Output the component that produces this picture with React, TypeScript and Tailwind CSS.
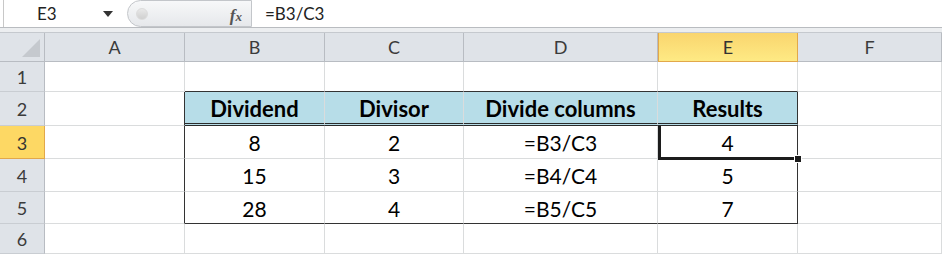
import React from 'react';

const cols = ['A', 'B', 'C', 'D', 'E', 'F'];
const widths = ['w-[140px]', 'w-[140px]', 'w-[139px]', 'w-[194px]', 'w-[140px]', 'w-[144px]'];
const heights = ['h-[30px]', 'h-[34px]', 'h-[33px]', 'h-[33px]', 'h-[32px]', 'h-[30px]'];

const table: Record<number, string[]> = {
    2: ['Dividend', 'Divisor', 'Divide columns', 'Results'],
    3: ['8', '2', '=B3/C3', '4'],
    4: ['15', '3', '=B4/C4', '5'],
    5: ['28', '4', '=B5/C5', '7'],
};

function cellClass(row: number, col: number) {
    // col: 0=A .. 5=F
    const inTable = row >= 2 && row <= 5 && col >= 1 && col <= 4;
    let cls = 'relative flex items-center justify-center shrink-0 border-r border-b border-[#dadcdd]';
    if (inTable) {
        cls += ' text-black';
        if (row === 2) cls += ' text-[22px] bg-[#b7dde8] font-bold border-b-[3px] border-b-[#2b2b2b] border-double pt-[1px]';
        else cls += ' text-[21px] pt-[2px]';
        if (row === 5) cls += ' border-b-[#333]';
        if (col === 4) cls += ' border-r-[#333]';
    }
    // table top / left edges live on the neighbours
    if (row === 1 && col >= 1 && col <= 4) cls += ' border-b-[#333]';
    if (col === 0 && row >= 2 && row <= 5) cls += ' border-r-[#333]';
    return cls;
}

export default function App() {
    return (
        <div className="w-[942px] h-[255px] overflow-hidden bg-white text-[#333]" style={{ fontFamily: 'Lato, "Open Sans", sans-serif' }}>
            {/* formula bar */}
            <div className="h-[28px] flex items-center border-b border-[#b9bcc0] bg-white">
                <div className="w-[124px] h-full flex items-center border-l border-[#c8c8c8] ml-[3px] relative">
                    <span className="ml-[33px] text-[17px] text-[#222]">E3</span>
                    <span className="absolute left-[99px] top-[11px] w-0 h-0 border-l-[5px] border-r-[5px] border-t-[6px] border-l-transparent border-r-transparent border-t-[#333]" />
                </div>
                <div className="w-[125px] h-full rounded-l-[14px] border border-[#c3c6ca] bg-gradient-to-b from-[#f7f8f9] to-[#e6e8eb] flex items-center relative">
                    <span className="ml-[8px] w-[12px] h-[12px] rounded-full bg-gradient-to-b from-[#e8e8e8] to-[#d0d0d0] border border-[#dcdcdc]" />
                    <span className="absolute right-[9px] top-[2px] text-[17px] italic font-bold text-[#555]" style={{ fontFamily: '"Liberation Serif", serif' }}>
                        f<span className="text-[13px]">x</span>
                    </span>
                </div>
                <span className="ml-[13px] text-[17px] text-[#222]">=B3/C3</span>
            </div>
            <div className="h-[5px] bg-[#eceef0] border-b border-[#c5c9ce]" />

            {/* column headers */}
            <div className="flex h-[29px]">
                <div className="w-[45px] shrink-0 bg-[#dfe3e8] border-r border-b border-[#b8bcc2] relative">
                    <svg className="absolute right-[4px] bottom-[4px]" width="18" height="18"><polygon points="18,0 18,18 0,18" fill="#c5c9ce" /></svg>
                </div>
                {cols.map((c, i) => (
                    <div
                        key={c}
                        className={`${widths[i]} shrink-0 flex items-center justify-center text-[18px] border-r border-b ${c === 'E'
                            ? 'bg-gradient-to-b from-[#f9d56e] to-[#feea84] border-[#e2a84a] border-l text-[#333]'
                            : 'bg-[#dfe3e8] border-[#b8bcc2] text-[#3b3b3b]'
                            }`}
                    >
                        {c}
                    </div>
                ))}
            </div>

            {/* rows */}
            {[1, 2, 3, 4, 5, 6].map((r, ri) => (
                <div key={r} className={`flex ${heights[ri]}`}>
                    <div
                        className={`w-[45px] shrink-0 flex items-center justify-center text-[18px] pt-[2px] border-r border-b ${r === 3
                            ? 'bg-[#fdd864] border-[#e2a84a] text-[#333]'
                            : 'bg-[#dfe3e8] border-[#b8bcc2] border-b-[#c9cdd2] text-[#3b3b3b]'
                            }`}
                    >
                        {r}
                    </div>
                    {cols.map((c, ci) => (
                        <div key={c} className={`${widths[ci]} ${cellClass(r, ci)}`}>
                            {table[r] && ci >= 1 && ci <= 4 ? table[r][ci - 1] : ''}
                            {r === 3 && c === 'E' && (
                                <>
                                    <span className="absolute left-0 top-0 bottom-[-1px] w-[3px] bg-[#1c1c1c]" />
                                    <span className="absolute left-0 right-[-1px] bottom-[-2px] h-[3px] bg-[#1c1c1c]" />
                                    <span className="absolute z-10 right-[-5px] bottom-[-5px] w-[8px] h-[8px] bg-[#1c1c1c] border border-white" />
                                </>
                            )}
                        </div>
                    ))}
                </div>
            ))}
        </div>
    );
}
